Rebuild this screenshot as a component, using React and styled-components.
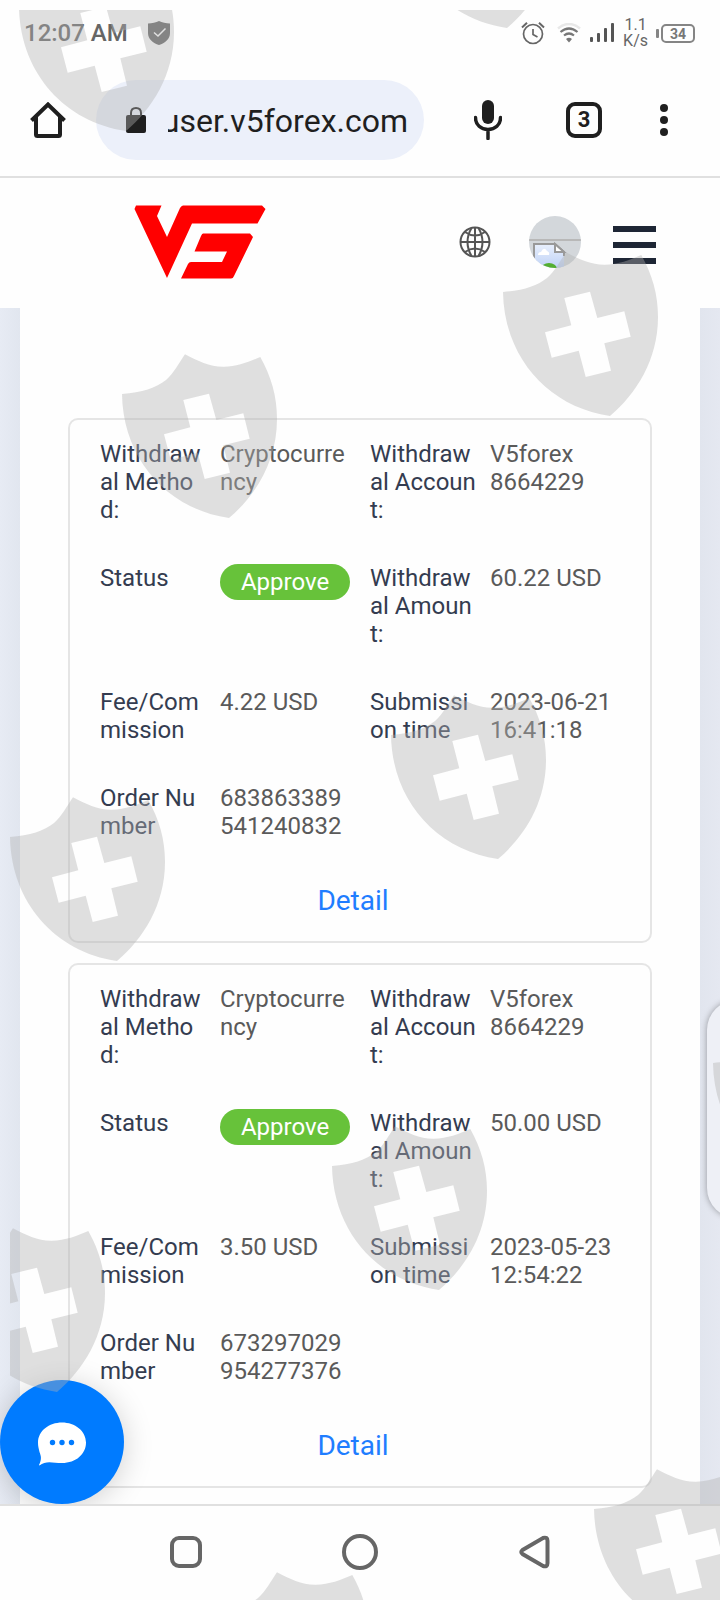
import styled, { createGlobalStyle } from 'styled-components';

const withdrawals = [
  {
    method: 'Cryptocurrency',
    account: 'V5forex\n8664229',
    status: 'Approve',
    amount: '60.22 USD',
    fee: '4.22 USD',
    submitted: '2023-06-21 16:41:18',
    order: '683863389541240832',
  },
  {
    method: 'Cryptocurrency',
    account: 'V5forex\n8664229',
    status: 'Approve',
    amount: '50.00 USD',
    fee: '3.50 USD',
    submitted: '2023-05-23 12:54:22',
    order: '673297029954277376',
  },
];

const shields = [
  [9, -43],
  [390, -146],
  [493, 242],
  [112, 344],
  [381, 685],
  [0, 787],
  [703, 1013],
  [322, 1116],
  [-60, 1218],
  [584, 1459],
  [204, 1562],
];

export default function App() {
  return (
    <Screen>
      <GlobalStyle />
      <StatusBar />
      <BrowserBar />
      <SiteHeader />
      <Content>
        <Panel>
          {withdrawals.map((withdrawal) => (
            <WithdrawalCard key={withdrawal.order} {...withdrawal} />
          ))}
        </Panel>
        <SideHandle />
        <ChatButton aria-label="Chat">
          <svg width="48" height="44" viewBox="0 0 48 44">
            <path
              d="M24 0.5C37 0.5 48 9 48 20.5S38 41 24 41C15 41 8 38 1.500 43.500L1 43C4 37 3 34 1.500 30C0.500 26 0 24 0 20.500C0 9 11 0.500 24 0.500Z"
              fill="#fff"
            />
            <circle cx="14.500" cy="20.500" r="2.700" fill="#007bff" />
            <circle cx="24" cy="20.500" r="2.700" fill="#007bff" />
            <circle cx="33.500" cy="20.500" r="2.700" fill="#007bff" />
          </svg>
        </ChatButton>
      </Content>
      <NavBar />
      <Watermark />
    </Screen>
  );
}

function StatusBar() {
  return (
    <StatusRow>
      <StatusTime>12:07 AM</StatusTime>
      <svg width="22" height="24" viewBox="0 0 22 24">
        <path
          d="M11 0C14 1.500 18 2.300 22 2.500V12C22 18 17 22 11 24C5 22 0 18 0 12V2.500C4 2.300 8 1.500 11 0Z"
          fill="#666"
        />
        <path
          d="M6 11.500L10 15L17.500 7.500"
          fill="none"
          stroke="#fff"
          strokeWidth="1.500"
        />
      </svg>
      <StatusIcons>
        <svg width="27" height="24" viewBox="0 0 27 24" fill="none" stroke="#666">
          <circle cx="12" cy="13" r="9.500" strokeWidth="1.700" />
          <path d="M12 8V13.500L16.500 16" strokeWidth="1.700" />
          <path d="M1 6.500L6 1.800M23 6.500L18 1.800" strokeWidth="2" />
        </svg>
        <svg width="24" height="20" viewBox="0 0 24 20" fill="none">
          <path d="M1 5.500Q12 -3.500 23 5.500" stroke="#e8e8e8" strokeWidth="2.500" />
          <path d="M3.500 9Q12 2 20.500 9" stroke="#777" strokeWidth="2.200" />
          <path d="M7 12.500Q12 8.500 17 12.500" stroke="#777" strokeWidth="2.200" />
          <path d="M9 16Q12 13.500 15 16L12 19.500Z" fill="#777" />
        </svg>
        <svg width="24" height="20" viewBox="0 0 24 20" fill="#555">
          <rect x="0" y="14" width="3" height="5" rx="1" />
          <rect x="7" y="10" width="3" height="9" rx="1" />
          <rect x="14" y="5" width="3" height="14" rx="1" />
          <rect x="21" y="0" width="3" height="19" rx="1" />
        </svg>
        <Speed>
          <span>1.1</span>
          <span>K/s</span>
        </Speed>
        <Battery>34</Battery>
      </StatusIcons>
    </StatusRow>
  );
}

function BrowserBar() {
  return (
    <BrowserRow>
      <IconButton aria-label="Home">
        <svg width="36" height="36" viewBox="0 0 36 36" fill="none" stroke="#1f1f1f">
          <path
            d="M1.500 18.500L18 2.500L34.500 18.500M6 15V32.500Q6 34 7.500 34H28.500Q30 34 30 32.500V15"
            strokeWidth="4"
          />
        </svg>
      </IconButton>
      <AddressPill>
        <svg width="20" height="26" viewBox="0 0 20 26">
          <path
            d="M5 10V6Q5 1 10 1T15 6V10"
            fill="none"
            stroke="#1f1f1f"
            strokeWidth="2"
          />
          <rect y="8" width="20" height="18" rx="2" fill="#1f1f1f" />
        </svg>
        <AddressInput aria-label="Address" value="user.v5forex.com" readOnly />
      </AddressPill>
      <BrowserActions>
        <IconButton aria-label="Voice search">
          <svg width="28" height="40" viewBox="0 0 28 40">
            <rect x="8" y="0" width="12" height="24" rx="6" fill="#1f1f1f" />
            <path
              d="M1.500 17.500C1.500 25 7 29.500 14 29.500S26.500 25 26.500 17.500M14 29.500V38.500"
              fill="none"
              stroke="#1f1f1f"
              strokeWidth="3.500"
              strokeLinecap="round"
            />
          </svg>
        </IconButton>
        <TabsButton aria-label="Open tabs">3</TabsButton>
        <IconButton aria-label="More options">
          <svg width="8" height="32" viewBox="0 0 8 32" fill="#1f1f1f">
            <circle cx="4" cy="4" r="4" />
            <circle cx="4" cy="16" r="4" />
            <circle cx="4" cy="28" r="4" />
          </svg>
        </IconButton>
      </BrowserActions>
    </BrowserRow>
  );
}

function SiteHeader() {
  return (
    <HeaderRow>
      <LogoLink href="#" aria-label="V5">
        <svg width="132" height="74" viewBox="0 0 132 74" fill="#f00">
          <path d="M2 0.500H27.500L23 11L33 32L46 3Q47.500 0.500 49 0.500H128L131.500 4L123.500 18.500H58L33 73L0.500 4Z" />
          <path d="M69 28.500H116L119 32L100 71Q99 73.500 97 73.500H47L54 59Q55 57 57 57H88L93 46.500H60.500L67 31Q68 28.500 69 28.500Z" />
        </svg>
      </LogoLink>
      <HeaderActions>
        <IconButton aria-label="Language">
          <svg
            width="32"
            height="32"
            viewBox="0 0 32 32"
            fill="none"
            stroke="#555"
            strokeWidth="2"
          >
            <circle cx="16" cy="16" r="14.500" />
            <path d="M16 1.500V30.500M1.500 16H30.500M6 6Q16 13 26 6M6 26Q16 19 26 26M12.500 2Q4.500 16 12.500 30M19.500 2Q27.500 16 19.500 30" />
          </svg>
        </IconButton>
        <Avatar aria-label="Account">
          <svg width="52" height="52" viewBox="0 0 52 52">
            <defs>
              <linearGradient id="sky" x1="0" y1="0" x2="0" y2="1">
                <stop offset="0" stopColor="#e8effc" />
                <stop offset="1" stopColor="#b8cdf5" />
              </linearGradient>
            </defs>
            <path d="M0 24H52" stroke="#b8b8b8" strokeWidth="2" />
            <path d="M5 28H26L35 36V56H5Z" fill="url(#sky)" />
            <path d="M5 56V28H26L35 36V40" fill="none" stroke="#999" strokeWidth="2" />
            <path d="M26 28V36H35Z" fill="#fff" stroke="#999" strokeWidth="2" />
            <path d="M9 39Q9 36 12 36Q15 30 18 35Q21 36 20 39Z" fill="#fff" />
            <ellipse cx="20" cy="53" rx="8" ry="6" fill="#54ae32" />
          </svg>
        </Avatar>
        <MenuButton aria-label="Menu">
          <MenuLine />
          <MenuLine />
          <MenuLine />
        </MenuButton>
      </HeaderActions>
    </HeaderRow>
  );
}

function WithdrawalCard({ method, account, status, amount, fee, submitted, order }) {
  return (
    <Card>
      <FieldGrid>
        <Field label="Withdrawal Method:">{method}</Field>
        <Field label="Withdrawal Account:">{account}</Field>
        <Field label="Status">
          <StatusTag>{status}</StatusTag>
        </Field>
        <Field label="Withdrawal Amount:">{amount}</Field>
        <Field label="Fee/Commission">{fee}</Field>
        <Field label="Submission time">{submitted}</Field>
        <Field label="Order Number">{order}</Field>
      </FieldGrid>
      <CardFooter>
        <DetailButton>Detail</DetailButton>
      </CardFooter>
    </Card>
  );
}

function Field({ label, children }) {
  return (
    <FieldRow>
      <FieldLabel>{label}</FieldLabel>
      <FieldValue>{children}</FieldValue>
    </FieldRow>
  );
}

function NavBar() {
  return (
    <NavRow>
      <IconButton aria-label="Recent apps">
        <svg width="36" height="36" viewBox="0 0 36 36">
          <rect
            x="4"
            y="4"
            width="28"
            height="28"
            rx="7"
            fill="none"
            stroke="#666"
            strokeWidth="4"
          />
        </svg>
      </IconButton>
      <IconButton aria-label="Home screen">
        <svg width="36" height="36" viewBox="0 0 36 36">
          <circle cx="18" cy="18" r="16" fill="none" stroke="#666" strokeWidth="4" />
        </svg>
      </IconButton>
      <IconButton aria-label="Back">
        <svg width="36" height="36" viewBox="-2 0 36 36">
          <path
            d="M4.500 16L25 4Q29.500 2.500 29.500 7V29Q29.500 33.500 25 32L4.500 20Q2 18 4.500 16Z"
            fill="none"
            stroke="#666"
            strokeWidth="4"
          />
        </svg>
      </IconButton>
    </NavRow>
  );
}

function Watermark() {
  return (
    <WatermarkLayer aria-hidden="true">
      <defs>
        <path
          id="shield"
          fillRule="evenodd"
          d="M0 40C20 38.500 34 34 44 26C52 19 57 9 63 0.300C76 7 88 13 102 12.700C115 12.500 127 8 138.300 3C149 22 155 42 155 65C155 108 133 142 107 164C45 155 1 105 0 40ZM61.300 46L68.300 73.300L42 80.300L48.700 105.700L75.700 98.700L82.700 125L108 118.700L101.300 91.300L127.700 84.700L121.300 59.300L94.300 66L87 39.700Z"
        />
      </defs>
      {shields.map(([x, y]) => (
        <use key={`${x},${y}`} href="#shield" x={x} y={y} />
      ))}
    </WatermarkLayer>
  );
}

const GlobalStyle = createGlobalStyle`
  * {
    box-sizing: border-box;
  }

  body {
    margin: 0;
    background-color: #fefefe;
    font-family: Roboto, 'Liberation Sans', sans-serif;
  }

  button,
  input {
    font-family: inherit;
  }

  svg {
    display: block;
  }
`;

const Screen = styled.div`
  position: relative;
  display: flex;
  flex-direction: column;
  height: 100vh;
  overflow: hidden;
`;

const StatusRow = styled.div`
  display: flex;
  align-items: center;
  height: 64px;
  padding: 2px 25px 0 24px;
  flex: none;
`;

const StatusTime = styled.span`
  color: #666;
  font-size: 24px;
  font-weight: 500;
  margin-right: 20px;
`;

const StatusIcons = styled.div`
  display: flex;
  align-items: center;
  gap: 9px;
  margin-left: auto;
`;

const Speed = styled.span`
  display: flex;
  flex-direction: column;
  align-items: center;
  color: #666;
  font-size: 16px;
  line-height: 16px;
`;

const Battery = styled.span`
  position: relative;
  display: grid;
  place-items: center;
  width: 34px;
  height: 19px;
  margin-left: 4px;
  border: 2px solid #858585;
  border-radius: 5px;
  color: #777;
  font-size: 14px;
  font-weight: 700;

  &::before {
    content: '';
    position: absolute;
    left: -7px;
    width: 3px;
    height: 9px;
    border-radius: 1px;
    background-color: #858585;
  }
`;

const BrowserRow = styled.div`
  display: flex;
  align-items: center;
  height: 114px;
  padding: 0 52px 0 30px;
  border-bottom: 2px solid #e0e0e0;
  flex: none;
`;

const IconButton = styled.button`
  display: block;
  padding: 0;
  border: none;
  background: none;
`;

const AddressPill = styled.div`
  display: flex;
  align-items: center;
  flex: 1;
  min-width: 0;
  height: 80px;
  margin-left: 30px;
  padding: 0 16px 0 30px;
  border-radius: 40px;
  background-color: #ecf0fa;
`;

/* rtl keeps the end of a long address in view */
const AddressInput = styled.input`
  direction: rtl;
  flex: 1;
  min-width: 0;
  margin-left: 22px;
  padding: 2px 0 0;
  border: none;
  outline: none;
  background: none;
  color: #1f1f1f;
  font-size: 32px;
`;

const BrowserActions = styled.div`
  display: flex;
  align-items: center;
  gap: 58px;
  margin-left: 50px;
`;

const TabsButton = styled.button`
  width: 36px;
  height: 36px;
  margin-left: 6px;
  padding: 0;
  border: 4px solid #1f1f1f;
  border-radius: 9px;
  background: none;
  color: #1f1f1f;
  font-size: 22px;
  font-weight: 700;
  line-height: 26px;
`;

const HeaderRow = styled.header`
  display: flex;
  align-items: center;
  justify-content: space-between;
  height: 130px;
  padding: 0 64px 2px 134px;
  flex: none;
`;

const LogoLink = styled.a`
  display: block;
`;

const HeaderActions = styled.div`
  display: flex;
  align-items: center;
`;

const Avatar = styled.button`
  width: 52px;
  height: 52px;
  margin: 0 32px 0 38px;
  padding: 0;
  border: none;
  border-radius: 50%;
  overflow: hidden;
  background-color: #d3d7db;
`;

const MenuButton = styled.button`
  display: flex;
  flex-direction: column;
  gap: 10px;
  padding: 6px 0 0;
  border: none;
  background: none;
`;

const MenuLine = styled.span`
  width: 43px;
  height: 6px;
  background-color: #1e2635;
`;

const Content = styled.main`
  position: relative;
  flex: 1;
  min-height: 0;
  padding: 0 20px;
  overflow: hidden;
  background: linear-gradient(to right, #e7ebf4, #e1e6ef 20px, #e1e5ee calc(100% - 20px), #e5e8f1);
`;

const Panel = styled.section`
  display: flex;
  flex-direction: column;
  gap: 20px;
  min-height: 100%;
  padding: 110px 48px 20px;
  background-color: #fefefe;
`;

const Card = styled.article`
  padding: 20px 10px 19px 30px;
  border: 2px solid #e5e5e5;
  border-radius: 10px;
`;

const FieldGrid = styled.dl`
  display: grid;
  grid-template-columns: 1fr 1fr;
  row-gap: 40px;
  margin: 0;
  font-size: 24px;
  line-height: 28px;
`;

const FieldRow = styled.div`
  display: flex;
  gap: 10px;
  padding-right: 20px;
`;

const FieldLabel = styled.dt`
  flex: none;
  width: 110px;
  color: #343c50;
  word-break: break-all;
`;

const FieldValue = styled.dd`
  flex: 1;
  margin: 0;
  color: #5a5a5a;
  white-space: pre-line;
  word-break: break-all;
`;

const StatusTag = styled.span`
  display: block;
  height: 36px;
  border-radius: 18px;
  background-color: #67c23a;
  color: #fff;
  line-height: 36px;
  text-align: center;
`;

const CardFooter = styled.footer`
  display: flex;
  justify-content: center;
  margin-top: 40px;
  padding-right: 34px;
`;

const DetailButton = styled.button`
  padding: 0;
  border: none;
  background: none;
  color: #1f7dff;
  font-size: 28px;
  line-height: 42px;
`;

const SideHandle = styled.div`
  position: absolute;
  top: 692px;
  right: -60px;
  width: 73px;
  height: 218px;
  border-radius: 30px;
  background-color: #eef0f6;
  box-shadow: 0 0 6px rgba(0, 0, 0, 0.35);
`;

const ChatButton = styled.button`
  position: absolute;
  bottom: 0;
  left: 0;
  display: grid;
  place-items: center;
  width: 124px;
  height: 124px;
  padding: 4px 0 0;
  border: none;
  border-radius: 50%;
  background-color: #007bff;
  box-shadow: 0 4px 30px rgba(0, 0, 0, 0.18);
`;

const NavRow = styled.nav`
  display: flex;
  justify-content: center;
  align-items: center;
  gap: 138px;
  height: 96px;
  padding-bottom: 2px;
  border-top: 2px solid #e0e0e0;
  flex: none;
`;

const WatermarkLayer = styled.svg`
  position: absolute;
  top: 10px;
  left: 10px;
  width: calc(100% - 10px);
  height: calc(100% - 10px);
  fill: rgba(178, 178, 178, 0.4);
  pointer-events: none;
`;
